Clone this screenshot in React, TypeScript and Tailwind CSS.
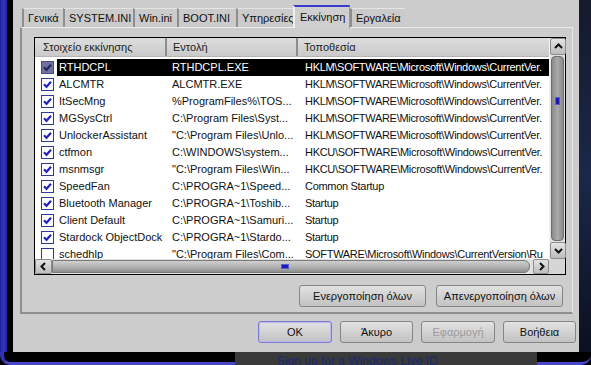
import React from "react";

type Row = {
  name: string;
  command: string;
  location: string;
  checked: boolean;
};

const rows: Row[] = [
  { name: "RTHDCPL", command: "RTHDCPL.EXE", location: "HKLM\\SOFTWARE\\Microsoft\\Windows\\CurrentVer.", checked: true },
  { name: "ALCMTR", command: "ALCMTR.EXE", location: "HKLM\\SOFTWARE\\Microsoft\\Windows\\CurrentVer.", checked: true },
  { name: "ItSecMng", command: "%ProgramFiles%\\TOS...", location: "HKLM\\SOFTWARE\\Microsoft\\Windows\\CurrentVer.", checked: true },
  { name: "MGSysCtrl", command: "C:\\Program Files\\Syst...", location: "HKLM\\SOFTWARE\\Microsoft\\Windows\\CurrentVer.", checked: true },
  { name: "UnlockerAssistant", command: "\"C:\\Program Files\\Unlo...", location: "HKLM\\SOFTWARE\\Microsoft\\Windows\\CurrentVer.", checked: true },
  { name: "ctfmon", command: "C:\\WINDOWS\\system...", location: "HKCU\\SOFTWARE\\Microsoft\\Windows\\CurrentVer.", checked: true },
  { name: "msnmsgr", command: "\"C:\\Program Files\\Win...", location: "HKCU\\SOFTWARE\\Microsoft\\Windows\\CurrentVer.", checked: true },
  { name: "SpeedFan", command: "C:\\PROGRA~1\\Speed...", location: "Common Startup", checked: true },
  { name: "Bluetooth Manager", command: "C:\\PROGRA~1\\Toshib...", location: "Startup", checked: true },
  { name: "Client Default", command: "C:\\PROGRA~1\\Samuri...", location: "Startup", checked: true },
  { name: "Stardock ObjectDock", command: "C:\\PROGRA~1\\Stardo...", location: "Startup", checked: true },
  { name: "schedhlp", command: "\"C:\\Program Files\\Com...", location: "SOFTWARE\\Microsoft\\Windows\\CurrentVersion\\Ru", checked: false },
];

const tabs = [
  { label: "Γενικά", w: "w-[41px]" },
  { label: "SYSTEM.INI", w: "w-[70px]" },
  { label: "Win.ini", w: "w-[44px]" },
  { label: "BOOT.INI", w: "w-[59px]" },
  { label: "Υπηρεσίες", w: "w-[57px]" },
  { label: "Εκκίνηση", w: "w-[57px]", active: true },
  { label: "Εργαλεία", w: "w-[55px]" },
];

function CheckBox({ checked, selected }: { checked: boolean; selected?: boolean }) {
  return (
    <div
      className={`w-[13px] h-[13px] shrink-0 border flex items-center justify-center ${
        selected ? "bg-[#72729e] border-[#4c4c78]" : "bg-white border-[#2b3a9c]"
      }`}
    >
      {checked && (
        <svg width="11" height="11" viewBox="0 0 11 11">
          <path
            d="M2 5.3 L4.5 7.8 L9 2.8"
            fill="none"
            stroke={selected ? "#262660" : "#2424c4"}
            strokeWidth="2.2"
          />
        </svg>
      )}
    </div>
  );
}

function Arrow({ dir }: { dir: "up" | "down" | "left" | "right" }) {
  const d = {
    up: "M3 8 L6.5 4.5 L10 8",
    down: "M3 5 L6.5 8.5 L10 5",
    left: "M8 3 L4.5 6.5 L8 10",
    right: "M5 3 L8.5 6.5 L5 10",
  }[dir];
  return (
    <svg width="13" height="13" viewBox="0 0 13 13">
      <path d={d} fill="none" stroke="#111" strokeWidth="2" />
    </svg>
  );
}

function ScrollButton({ dir, className }: { dir: "up" | "down" | "left" | "right"; className: string }) {
  return (
    <div
      className={`${className} shrink-0 flex items-center justify-center bg-gradient-to-b from-[#e4e4e4] to-[#bdbdbd] border border-[#8c8c8c] rounded-[2px]`}
    >
      <Arrow dir={dir} />
    </div>
  );
}

function Button({
  children,
  className,
  disabled,
  focused,
}: {
  children: React.ReactNode;
  className: string;
  disabled?: boolean;
  focused?: boolean;
}) {
  return (
    <div
      className={`${className} h-[22px] flex items-center justify-center rounded-[3px] border bg-gradient-to-b from-[#e2e2e2] to-[#c2c2c2] ${
        focused ? "border-[#7b7bcf] shadow-[inset_0_0_0_1px_#b9b9f0]" : "border-[#858585]"
      } ${disabled ? "text-[#9c9c9c]" : "text-[#111]"}`}
    >
      {children}
    </div>
  );
}

function ListView() {
  return (
    <div className="ml-[12px] mt-[9px] w-[532px] h-[238px] border border-black bg-white flex flex-col">
      <div className="flex h-[221px]">
        {/* rows + header */}
        <div className="w-[514px] flex flex-col overflow-hidden">
          <div className="h-[19px] shrink-0 flex bg-gradient-to-b from-[#dedede] to-[#cacaca] text-[#222] border-b border-[#b4b4b4]">
            <div className="w-[130px] pl-[8px] pt-[1px] flex items-center">Στοιχείο εκκίνησης</div>
            <div className="w-[2px] bg-[#8c8c8c]" />
            <div className="w-[129px] pl-[6px] pt-[1px] flex items-center">Εντολή</div>
            <div className="w-[2px] bg-[#8c8c8c]" />
            <div className="flex-1 pl-[6px] pt-[1px] flex items-center">Τοποθεσία</div>
          </div>
          <div className="pt-[2px] flex flex-col">
            {rows.map((r, i) => {
              const sel = i === 0;
              return (
                <div key={r.name} className="h-[17px] flex items-center shrink-0">
                  <div className="w-[6px] shrink-0" />
                  <CheckBox checked={r.checked} selected={sel} />
                  <div className="w-[3px] shrink-0" />
                  <div
                    className={`h-[17px] flex-1 flex items-center whitespace-nowrap overflow-hidden ${
                      sel ? "bg-black text-white" : "text-[#111]"
                    }`}
                  >
                    <div className="w-[110px] pl-[2px] shrink-0 overflow-hidden">{r.name}</div>
                    <div className="w-[131px] pl-[5px] shrink-0 overflow-hidden">{r.command}</div>
                    <div className="flex-1 pl-[7px] overflow-hidden tracking-[-0.3px]">{r.location}</div>
                  </div>
                </div>
              );
            })}
          </div>
        </div>
        {/* vertical scrollbar */}
        <div className="w-[16px] flex flex-col bg-[#e2e2e2] border-l border-[#f4f4f4]">
          <ScrollButton dir="up" className="w-[16px] h-[17px]" />
          <div className="flex-1 px-[1px] py-[1px] flex">
            <div className="flex-1 rounded-[4px] bg-gradient-to-r from-[#8a8a8a] via-[#a9a9a9] to-[#8a8a8a] border border-[#6e6e6e] flex flex-col items-center pt-[40px]">
              <div className="w-[5px] h-[8px] bg-[#1c1cb0] border border-[#5a5ad8]" />
            </div>
          </div>
          <ScrollButton dir="down" className="w-[16px] h-[17px]" />
        </div>
      </div>
      {/* horizontal scrollbar */}
      <div className="flex h-[15px]">
        <div className="w-[514px] flex bg-[#e2e2e2]">
          <ScrollButton dir="left" className="w-[17px] h-[15px]" />
          <div className="flex-1 py-[1px] pr-[3px] flex">
            <div className="flex-1 rounded-r-[6px] bg-gradient-to-b from-[#cfcfcf] via-[#b4b4b4] to-[#8f8f8f] border border-[#7a7a7a] flex items-center pl-[228px]">
              <div className="w-[8px] h-[5px] bg-[#1c1cb0] border border-[#5a5ad8]" />
            </div>
          </div>
          <ScrollButton dir="right" className="w-[16px] h-[15px]" />
        </div>
        <div className="w-[16px] bg-[#d6d6d6]" />
      </div>
    </div>
  );
}

function Dialog() {
  return (
    <div className="w-[566px] h-[352px] bg-[#cccccc] flex flex-col">
      {/* tabs */}
      <div className="h-[27px] shrink-0 pl-[9px] flex items-end">
        {tabs.map((t) =>
          t.active ? (
            <div
              key={t.label}
              className={`${t.w} h-[23px] -mb-[1px] z-10 bg-[#cfcfcf] border-l-2 border-r border-[#f0f0f0] border-r-[#9a9a9a] border-t-2 border-t-[#3a3ad0] flex items-center pl-[5px] text-[#111]`}
            >
              {t.label}
            </div>
          ) : (
            <div
              key={t.label}
              className={`${t.w} h-[19px] bg-[#cbcbcb] border-l-2 border-[#8e8e8e] border-t border-t-[#e4e4e4] flex items-center pl-[4px] text-[#111]`}
            >
              {t.label}
            </div>
          )
        )}
      </div>
      {/* tab panel */}
      <div className="ml-[7px] w-[553px] h-[287px] shrink-0 bg-[#cdcdcd] border-l-2 border-b-2 border-[#8f8f8f] border-t border-t-[#ececec] border-r border-r-[#e6e6e6] flex flex-col">
        <ListView />
        <div className="mt-[10px] pr-[9px] flex justify-end gap-[10px]">
          <Button className="w-[127px]">Ενεργοποίηση όλων</Button>
          <Button className="w-[127px]">Απενεργοποίηση όλων</Button>
        </div>
      </div>
      <div className="mt-[7px] pr-[3px] flex justify-end gap-[8px]">
        <Button className="w-[74px]" focused>
          OK
        </Button>
        <Button className="w-[73px]">Άκυρο</Button>
        <Button className="w-[74px]" disabled>
          Εφαρμογή
        </Button>
        <Button className="w-[73px]">Βοήθεια</Button>
      </div>
    </div>
  );
}

export default function App() {
  return (
    <div className="w-[591px] h-[365px] overflow-hidden flex flex-col bg-black font-['Liberation_Sans',Arial,sans-serif] text-[11px] leading-none">
      <div className="flex h-[352px] shrink-0">
        <div className="w-[7px] bg-gradient-to-r from-[#2020a0] via-[#3434c0] to-[#22229a]" />
        <div className="w-[6px] bg-black" />
        <Dialog />
        <div className="flex-1 bg-gradient-to-b from-[#151a2c] via-[#1c2848] to-[#0c1020]" />
      </div>
      <div className="flex h-[13px] shrink-0">
        <div className="w-[235px] bg-black border-b-[3px] border-[#4848c8] rounded-bl-[10px] border-l-[4px] border-l-[#3030b0]" />
        <div className="w-[302px] bg-[#3a3a3a] pl-[42px] pt-[3px] text-[#1a2870] text-[12px] overflow-hidden whitespace-nowrap">
          Sign up for a Windows Live ID
        </div>
        <div className="flex-1 bg-black border-b-[3px] border-[#4848c8] rounded-br-[10px]" />
      </div>
    </div>
  );
}
